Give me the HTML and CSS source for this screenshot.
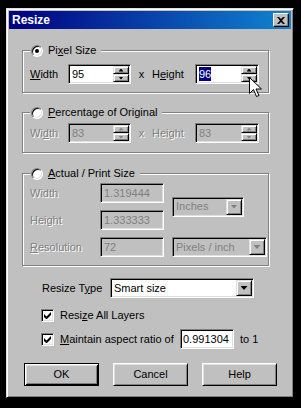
FILE: index.html
```html
<!DOCTYPE html>
<html lang="en">

<head>
    <meta charset="UTF-8">
    <title>Resize</title>
    <link rel="stylesheet" href="styles.css">
</head>

<body>
    <div class="dialog">
        <div class="titlebar">
            <span class="title">Resize</span>
            <span class="close">
                <svg width="8" height="7" viewBox="0 0 8 7"><path d="M0 0h2l2 2 2-2h2L5 3.5 8 7H6L4 5 2 7H0l3-3.5z" fill="#000"/></svg>
            </span>
        </div>

        <!-- Pixel size -->
        <fieldset class="group g1">
            <legend><span class="radio on"></span><span>Pi<u>x</u>el Size</span></legend>
            <div class="row">
                <label class="lbl lw"><u>W</u>idth</label>
                <div class="field fw1"><span>95</span><span class="spin"><i class="sb"><b class="up"></b></i><i class="sb"><b class="dn"></b></i></span></div>
                <span class="times">x</span>
                <label class="lbl lh">H<u>e</u>ight</label>
                <div class="field fw2"><span><span class="sel">96</span></span><span class="spin"><i class="sb"><b class="up"></b></i><i class="sb"><b class="dn"></b></i></span></div>
            </div>
        </fieldset>

        <!-- Percentage -->
        <fieldset class="group g2">
            <legend><span class="radio"></span><span><u>P</u>ercentage of Original</span></legend>
            <div class="row off">
                <label class="lbl lw">Wi<u>d</u>th</label>
                <div class="field fw1"><span>83</span><span class="spin"><i class="sb"><b class="up"></b></i><i class="sb"><b class="dn"></b></i></span></div>
                <span class="times">x</span>
                <label class="lbl lh">Hei<u>g</u>ht</label>
                <div class="field fw2"><span>83</span><span class="spin"><i class="sb"><b class="up"></b></i><i class="sb"><b class="dn"></b></i></span></div>
            </div>
        </fieldset>

        <!-- Actual / print size -->
        <fieldset class="group g3">
            <legend><span class="radio"></span><span><u>A</u>ctual / Print Size</span></legend>
            <div class="grid off">
                <label class="lbl">Width</label>
                <div class="field">1.319444</div>
                <div class="combo c-in"><span>Inches</span><i class="drop"><b class="dn7"></b></i></div>
                <label class="lbl">Height</label>
                <div class="field">1.333333</div>
                <label class="lbl"><u>R</u>esolution</label>
                <div class="field">72</div>
                <div class="combo c-px"><span>Pixels / inch</span><i class="drop"><b class="dn7"></b></i></div>
            </div>
        </fieldset>

        <div class="type-row">
            <label class="lbl lt">Resize T<u>y</u>pe</label>
            <div class="combo c-type"><span>Smart size</span><i class="drop"><b class="dn7"></b></i></div>
        </div>

        <div class="check c1">
            <span class="box"><svg width="7" height="7" viewBox="0 0 7 7"><path d="M0 2v3l2 2h1l4-4V0L2.5 4.5z" fill="#000"/></svg></span>
            <span>Resi<u>z</u>e All Layers</span>
        </div>

        <div class="check c2">
            <span class="box"><svg width="7" height="7" viewBox="0 0 7 7"><path d="M0 2v3l2 2h1l4-4V0L2.5 4.5z" fill="#000"/></svg></span>
            <span class="ratio-lbl"><u>M</u>aintain aspect ratio of</span>
            <div class="field ratio">0.991304</div>
            <span class="to">to 1</span>
        </div>

        <div class="buttons">
            <button class="btn default">OK</button>
            <button class="btn">Cancel</button>
            <button class="btn">Help</button>
        </div>
    </div>

    <!-- mouse pointer -->
    <svg class="cursor" width="13" height="21" viewBox="0 0 13 21">
        <path d="M0.5 0.5v16l4-4 3 7 2.5-1-3-6.5h5.5z" fill="#fff" stroke="#000" stroke-linejoin="miter"/>
    </svg>
</body>

</html>
```

FILE: styles.css
```css
* {
    box-sizing: border-box;
}

body {
    margin: 0;
    width: 301px;
    height: 408px;
    overflow: hidden;
    background: #000;
    font: 11px/13px "Liberation Sans", Arial, sans-serif;
    color: #000;
}

u {
    text-underline-offset: 1px;
}

.dialog {
    margin: 8px 0 0 6px;
    width: 288px;
    height: 390px;
    padding: 2px;
    background: #c0c0c0;
    border: 1px solid;
    border-color: #dfdfdf #000 #000 #dfdfdf;
    box-shadow: inset 1px 1px #fff, inset -1px -1px #808080;
}

.titlebar {
    height: 18px;
    display: flex;
    align-items: center;
    justify-content: space-between;
    padding: 0 2px 0 3px;
    background: linear-gradient(to right, #000080, #1084d0);
}

.title {
    color: #fff;
    font-weight: bold;
    font-size: 12px;
}

.close {
    width: 16px;
    height: 14px;
    display: flex;
    align-items: center;
    justify-content: center;
    background: #c0c0c0;
    border: 1px solid;
    border-color: #fff #000 #000 #fff;
    box-shadow: inset -1px -1px #808080;
}

/* group boxes */
.group {
    width: 247px;
    margin: 0 0 0 13px;
    border: 1px solid #808080;
    box-shadow: inset 1px 1px #fff, 1px 1px #fff;
    padding: 7px 0 8px 7px;
    min-width: 0;
}

.g1 { margin-top: 15px; }
.g2 { margin-top: 13px; padding-top: 4px; padding-bottom: 9px; }
.g3 { margin-top: 14px; padding-top: 3px; padding-bottom: 8px; }

legend {
    display: flex;
    align-items: center;
    gap: 5px;
    height: 13px;
    padding: 0 5px 0 1px;
    background: #c0c0c0;
}

.radio {
    position: relative;
    width: 12px;
    height: 12px;
    border-radius: 50%;
    background: #fff;
    border: 1px solid;
    border-color: #808080 #fff #fff #808080;
    box-shadow: inset 1px 1px #000, inset -1px -1px #dfdfdf;
}

.radio.on::after {
    content: "";
    position: absolute;
    left: 3px;
    top: 3px;
    width: 4px;
    height: 4px;
    border-radius: 50%;
    background: #000;
}

.row {
    display: flex;
    align-items: center;
    height: 20px;
}

.lw { width: 38px; }
.lh { width: 43px; }
.fw1 { width: 63px; }
.fw2 { width: 64px; }

.times {
    width: 21px;
    text-align: center;
}

/* text fields */
.field,
.combo {
    height: 20px;
    display: flex;
    align-items: center;
    justify-content: space-between;
    padding: 1px 1px 1px 3px;
    background: #fff;
    border: 1px solid;
    border-color: #808080 #fff #fff #808080;
    box-shadow: inset 1px 1px #000, inset -1px -1px #dfdfdf;
    white-space: nowrap;
}

.sel {
    background: #000080;
    color: #fff;
    padding: 1px 0;
}

.spin {
    display: flex;
    flex-direction: column;
    width: 16px;
    height: 16px;
}

.sb,
.drop {
    display: flex;
    align-items: center;
    justify-content: center;
    background: #c0c0c0;
    border: 1px solid;
    border-color: #dfdfdf #000 #000 #dfdfdf;
    box-shadow: inset 1px 1px #fff, inset -1px -1px #808080;
}

.sb {
    width: 16px;
    height: 8px;
}

.drop {
    width: 16px;
    height: 16px;
}

.up,
.dn {
    width: 5px;
    height: 3px;
    background: #000;
}

.up { clip-path: polygon(50% 0, 100% 100%, 0 100%); }
.dn { clip-path: polygon(0 0, 100% 0, 50% 100%); }

.dn7 {
    width: 7px;
    height: 4px;
    background: #000;
    clip-path: polygon(0 0, 100% 0, 50% 100%);
}

/* disabled parts */
.off .lbl,
.off .times {
    color: #808080;
    text-shadow: 1px 1px #fff;
}

.off .field,
.off .combo {
    background: #c0c0c0;
    color: #808080;
}

.off .up,
.off .dn,
.off .dn7 {
    background: #808080;
}

.grid {
    display: grid;
    grid-template-columns: 62px 64px 95px;
    grid-template-rows: 20px 20px 20px;
    row-gap: 7px;
    column-gap: 8px;
    align-items: center;
}

.c-in {
    width: 72px;
    grid-column: 3;
    grid-row: 1 / 3;
}

.c-px {
    width: 95px;
    grid-column: 3;
    grid-row: 3;
}

/* lower part */
.type-row {
    display: flex;
    align-items: center;
    margin-top: 12px;
    padding-left: 33px;
}

.lt { width: 68px; }

.c-type { width: 144px; }

.check {
    display: flex;
    align-items: center;
    gap: 6px;
    padding-left: 32px;
}

.c1 { margin-top: 11px; height: 13px; }
.c2 { margin-top: 7px; height: 20px; }

.box {
    width: 13px;
    height: 13px;
    display: flex;
    align-items: center;
    justify-content: center;
    background: #fff;
    border: 1px solid;
    border-color: #808080 #fff #fff #808080;
    box-shadow: inset 1px 1px #000, inset -1px -1px #dfdfdf;
}

.ratio-lbl { width: 114px; }

.ratio {
    width: 54px;
    padding-left: 2px;
}

.buttons {
    display: flex;
    gap: 14px;
    margin-top: 14px;
    padding-left: 15px;
}

.btn {
    width: 75px;
    height: 23px;
    padding: 0;
    font: inherit;
    color: #000;
    background: #c0c0c0;
    border: 1px solid;
    border-color: #fff #000 #000 #fff;
    box-shadow: inset 1px 1px #dfdfdf, inset -1px -1px #808080;
}

.btn.default {
    border-color: #000;
    box-shadow: inset 1px 1px #fff, inset -1px -1px #000, inset 2px 2px #dfdfdf, inset -2px -2px #808080;
}

.cursor {
    position: absolute;
    left: 249px;
    top: 77px;
}
```
